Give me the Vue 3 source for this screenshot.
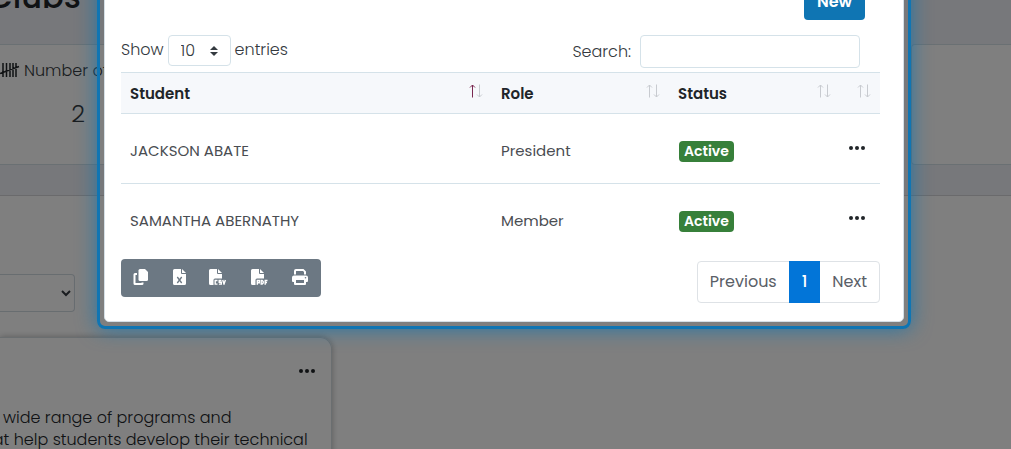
<script setup>
import { ref } from 'vue'

const pageSize = ref('10')
const search = ref('')
const members = [
  { name: 'JACKSON ABATE', role: 'President', status: 'Active' },
  { name: 'SAMANTHA ABERNATHY', role: 'Member', status: 'Active' },
]
const columns = [
  { label: 'Student', key: 'student', sorted: true },
  { label: 'Role', key: 'role' },
  { label: 'Status', key: 'status' },
  { label: '', key: 'menu' },
]
</script>

<template>
  <div class="screen">
    <main class="page">
      <header class="band title-band"><h1>Clubs</h1></header>
      <section class="stats">
        <article class="stat first">
          <div class="stat-label">
            <svg class="tally" viewBox="0 0 20 16" aria-hidden="true">
              <path d="M3 1v14M6.500 1v14M10 1v14M13 1v14M16 1v14M0 11.500L19 4.500" />
            </svg>
            <span>Number of Clubs</span>
          </div>
          <div class="stat-value">2</div>
        </article>
        <article class="stat last"></article>
      </section>
      <div class="band spacer-band"></div>
      <section class="content">
        <select class="filter" aria-label="Filter"><option></option></select>
        <article class="club">
          <button class="dots" type="button" aria-label="Club actions">
            <svg viewBox="0 0 16 4"><circle cx="2" cy="2" r="2" /><circle cx="8" cy="2" r="2" /><circle cx="14" cy="2" r="2" /></svg>
          </button>
          <p>wide range of programs and<br />that help students develop their technical</p>
        </article>
      </section>
    </main>

    <div class="overlay">
      <div class="ring" role="dialog" aria-label="Club members">
        <div class="modal">
          <div class="toolbar"><button class="new" type="button">New</button></div>
          <div class="controls">
            <label class="length">
              <span>Show</span>
              <span class="select-box">
                <select v-model="pageSize"><option>10</option><option>25</option></select>
                <svg viewBox="0 0 8 10" aria-hidden="true"><path d="M0 4L4 0l4 4zM0 6h8L4 10z" /></svg>
              </span>
              <span>entries</span>
            </label>
            <label class="search"><span>Search:</span> <input v-model="search" type="text" /></label>
          </div>
          <table>
            <thead>
              <tr>
                <th v-for="c in columns" :key="c.key" :class="c.key">
                  <div class="th">
                    <span>{{ c.label }}</span>
                    <svg class="sort" viewBox="0 0 14 14" aria-hidden="true">
                      <path :class="{ on: c.sorted }" d="M3.500 13.500V1M1 3.500L3.500 1 6 3.500" />
                      <path d="M10.500 .5V13M8 10.500l2.500 2.500 2.500-2.500" />
                    </svg>
                  </div>
                </th>
              </tr>
            </thead>
            <tbody>
              <tr v-for="m in members" :key="m.name">
                <td>{{ m.name }}</td>
                <td>{{ m.role }}</td>
                <td><span class="badge">{{ m.status }}</span></td>
                <td>
                  <button class="dots" type="button" :aria-label="'Actions for ' + m.name">
                    <svg viewBox="0 0 16 4"><circle cx="2" cy="2" r="2" /><circle cx="8" cy="2" r="2" /><circle cx="14" cy="2" r="2" /></svg>
                  </button>
                </td>
              </tr>
            </tbody>
          </table>
          <footer class="foot">
            <div class="exports">
              <button type="button" aria-label="Copy">
                <svg width="16" height="16" viewBox="0 0 16 16"><path d="M7 0h5l3 3v7.500a1.500 1.500 0 0 1-1.500 1.500H7A1.500 1.500 0 0 1 5.500 10.500v-9A1.500 1.500 0 0 1 7 0z" /><path d="M4 4H2A1.500 1.500 0 0 0 .5 5.500v9A1.500 1.500 0 0 0 2 16H9a1.500 1.500 0 0 0 1.500-1.500v-1h-2v.5H2.500V6H4z" /></svg>
              </button>
              <button type="button" aria-label="Excel">
                <svg width="13" height="16" viewBox="0 0 13 16"><path d="M1.500 0H8v4a1 1 0 0 0 1 1h4v9.500a1.500 1.500 0 0 1-1.500 1.500h-10A1.500 1.500 0 0 1 0 14.500v-13A1.500 1.500 0 0 1 1.500 0z" /><path d="M9 0l4 4H9z" /><path class="cut" d="M4.300 8l4.400 6M8.700 8l-4.400 6" /></svg>
              </button>
              <button type="button" aria-label="CSV">
                <svg width="18" height="16" viewBox="0 0 18 16"><path d="M1.500 0H8v4a1 1 0 0 0 1 1h4v4.500H6A1.500 1.500 0 0 0 4.500 11v5h-3A1.500 1.500 0 0 1 0 14.500v-13A1.500 1.500 0 0 1 1.500 0zM9 0l4 4H9z" /><path class="line" d="M8.500 11.500H6.200v3.600h2.300M12.400 11.500H10.200v1.800h2.100v1.800H9.900M13.700 11l1.300 4 1.400-4" /></svg>
              </button>
              <button type="button" aria-label="PDF">
                <svg width="18" height="16" viewBox="0 0 18 16"><path d="M1.500 0H8v4a1 1 0 0 0 1 1h4v4.500H6A1.500 1.500 0 0 0 4.500 11v5h-3A1.500 1.500 0 0 1 0 14.500v-13A1.500 1.500 0 0 1 1.500 0zM9 0l4 4H9z" /><path class="line" d="M6.300 15.700v-4.200h2v2.200h-2M10.200 11.500h1l1 1v1.500l-1 1h-1zM14.200 15.700v-4.200h2.300M14.200 13.500H16" /></svg>
              </button>
              <button type="button" aria-label="Print">
                <svg width="16" height="16" viewBox="0 0 16 16"><path d="M2 5.500V2a2 2 0 0 1 2-2h7.500L14 2.500v3h-2V3l-1-1H4v3.500z" /><path fill-rule="evenodd" d="M2 6.500h12a2 2 0 0 1 2 2V12a1 1 0 0 1-1 1h-1v2a1 1 0 0 1-1 1H3a1 1 0 0 1-1-1v-2H1a1 1 0 0 1-1-1V8.500a2 2 0 0 1 2-2zM4 11v3h8v-3zM13.500 8a.8.8 0 1 0 0 1.600.8.8 0 0 0 0-1.600z" /></svg>
              </button>
            </div>
            <nav class="pager" aria-label="Pagination">
              <a href="#">Previous</a><a href="#" class="current" aria-current="page">1</a><a href="#">Next</a>
            </nav>
          </footer>
        </div>
      </div>
    </div>
  </div>
</template>

<style>
body { margin: 0; }
</style>

<style scoped>
* { box-sizing: border-box; }
.screen {
  position: relative;
  height: 100vh;
  overflow: hidden;
  background: #fff;
  color: #343a40;
  font: 300 16px/22px Poppins, Inter, "Open Sans", sans-serif;
}
button, input, select { font: inherit; color: inherit; }
.band { background: #eef0f7; }
.title-band { display: flow-root; height: 44px; }
h1 {
  margin: -22px 0 0 -12px;
  font-size: 32px;
  line-height: 38px;
  font-weight: 500;
  color: #212529;
}
.stats {
  display: grid;
  grid-template-columns: 200px 1fr;
  gap: 711px;
  background: #eef0f7;
}
.stat {
  height: 121px;
  background: #fff;
  border: 1px solid #d5e0e7;
  border-radius: 4px;
}
.stat.first { border-left: 0; border-radius: 0 4px 4px 0; padding-top: 15px; }
.stat.last { border-right: 0; border-radius: 4px 0 0 4px; }
.stat-label { display: flex; align-items: center; gap: 4px; }
.tally { width: 20px; height: 16px; margin-bottom: 2px; fill: none; stroke: #212529; stroke-width: 1.500; }
.stat-value { width: 156px; margin-top: 16px; text-align: center; font-size: 24px; line-height: 32px; }
.spacer-band { height: 31px; border-bottom: 1px solid #d5d5d8; }
.content { padding-top: 78px; }
.filter {
  display: block;
  width: 75px;
  height: 38px;
  border: 1px solid #d0dae0;
  border-left: 0;
  border-radius: 0 4px 4px 0;
  background: #fff;
}
.club {
  width: 332px;
  height: 200px;
  margin-top: 25px;
  padding: 25px 16px 0 0;
  border: 1px solid #d5dce0;
  border-left: 0;
  border-radius: 0 12px 0 0;
  box-shadow: 0 0 6px rgba(0, 0, 0, 0.3);
}
.club p { margin: 28px 0 0 -23px; text-indent: 26px; white-space: nowrap; color: #212529; }
.dots {
  display: block;
  margin-left: auto;
  padding: 6px 0;
  border: 0;
  background: none;
}
.dots svg { display: block; width: 16px; height: 4px; fill: #212529; }
.overlay {
  position: absolute;
  inset: 0;
  padding-right: 3px;
  background: rgba(0, 0, 0, 0.5);
}
.ring {
  width: 814px;
  max-width: 100%;
  margin: -40px auto 0;
  padding: 4px;
  border: 3px solid #0f75b3;
  border-radius: 8px;
  box-shadow: 0 0 20px rgba(15, 117, 179, 0.8);
}
.modal {
  padding: 14px 23px 18px 16px;
  border: 1px solid #d5e0e7;
  border-radius: 5px;
  background: #fff;
}
.toolbar { display: flex; justify-content: flex-end; padding-right: 15px; }
.new {
  width: 61px;
  height: 38px;
  padding: 2px 0 0;
  border: 0;
  border-radius: 4px;
  background: #0f75b3;
  color: #fff;
  font-weight: 600;
}
.controls { display: flex; justify-content: space-between; padding: 15px 20px 4px 0; }
.length { display: flex; align-items: center; gap: 4px; height: 31px; }
.length > span:not(.select-box) { padding-bottom: 2px; }
.select-box { display: grid; align-items: center; }
.select-box select, .select-box svg { grid-area: 1 / 1; }
.select-box select {
  appearance: none;
  width: 63px;
  height: 31px;
  padding: 0 12px;
  border: 1px solid #d5e2e9;
  border-radius: 4px;
  background: #fff;
}
.select-box svg { width: 8px; height: 10px; margin-right: 13px; justify-self: end; fill: #343a40; pointer-events: none; }
.search { display: flex; align-items: center; gap: 9px; }
.search input { width: 220px; height: 33px; padding: 4px 8px; border: 1px solid #d5e2e9; border-radius: 4px; }
table { width: 100%; border-collapse: collapse; table-layout: fixed; font-size: 15px; font-weight: 400; }
th { height: 41px; padding: 0 9px; text-align: left; background: #f6f8fb; border-top: 1px solid #d5e2e9; border-bottom: 1px solid #d5e2e9; font-weight: 600; color: #212529; }
.role { width: 177px; }
.status { width: 171px; }
.menu { width: 40px; }
.th { display: flex; justify-content: space-between; align-items: center; height: 24px; }
.th span { padding-top: 2px; }
.sort { flex: none; width: 14px; height: 14px; margin-bottom: 4px; fill: none; stroke: #c8cbd0; }
.sort .on { stroke: #7a2850; }
td { height: 70px; padding: 4px 9px 0; color: #4a4d52; }
td .dots { margin-top: -6px; }
td:last-child { padding-right: 15px; }
tbody tr + tr { border-top: 1px solid #d5e2e9; }
.badge { display: inline-block; margin-left: 1px; padding: 0 5px; border-radius: 4px; background: #37803a; color: #fff; font-size: 14px; line-height: 21px; font-weight: 600; }
.foot { display: flex; justify-content: space-between; align-items: flex-start; padding-top: 5px; }
.exports { display: flex; justify-content: space-between; align-items: center; width: 200px; height: 38px; padding: 0 13px 2px 12px; border-radius: 4px; background: #6c7883; }
.exports button { padding: 0; border: 0; background: none; }
.exports svg { display: block; fill: #fff; }
.exports .cut { fill: none; stroke: #6c7883; stroke-width: 1.300; }
.exports .line { fill: none; stroke: #fff; stroke-width: 1.400; }
.pager { display: flex; margin-top: 2px; height: 42px; border: 1px solid #dee2e6; border-radius: 4px; line-height: 40px; font-weight: 400; }
.pager a { padding: 0 12px; color: #5a6067; text-decoration: none; }
.pager .current { margin: -1px 0; padding: 0 13px; line-height: 42px; background: #0275d8; color: #fff; font-weight: 500; }
</style>
